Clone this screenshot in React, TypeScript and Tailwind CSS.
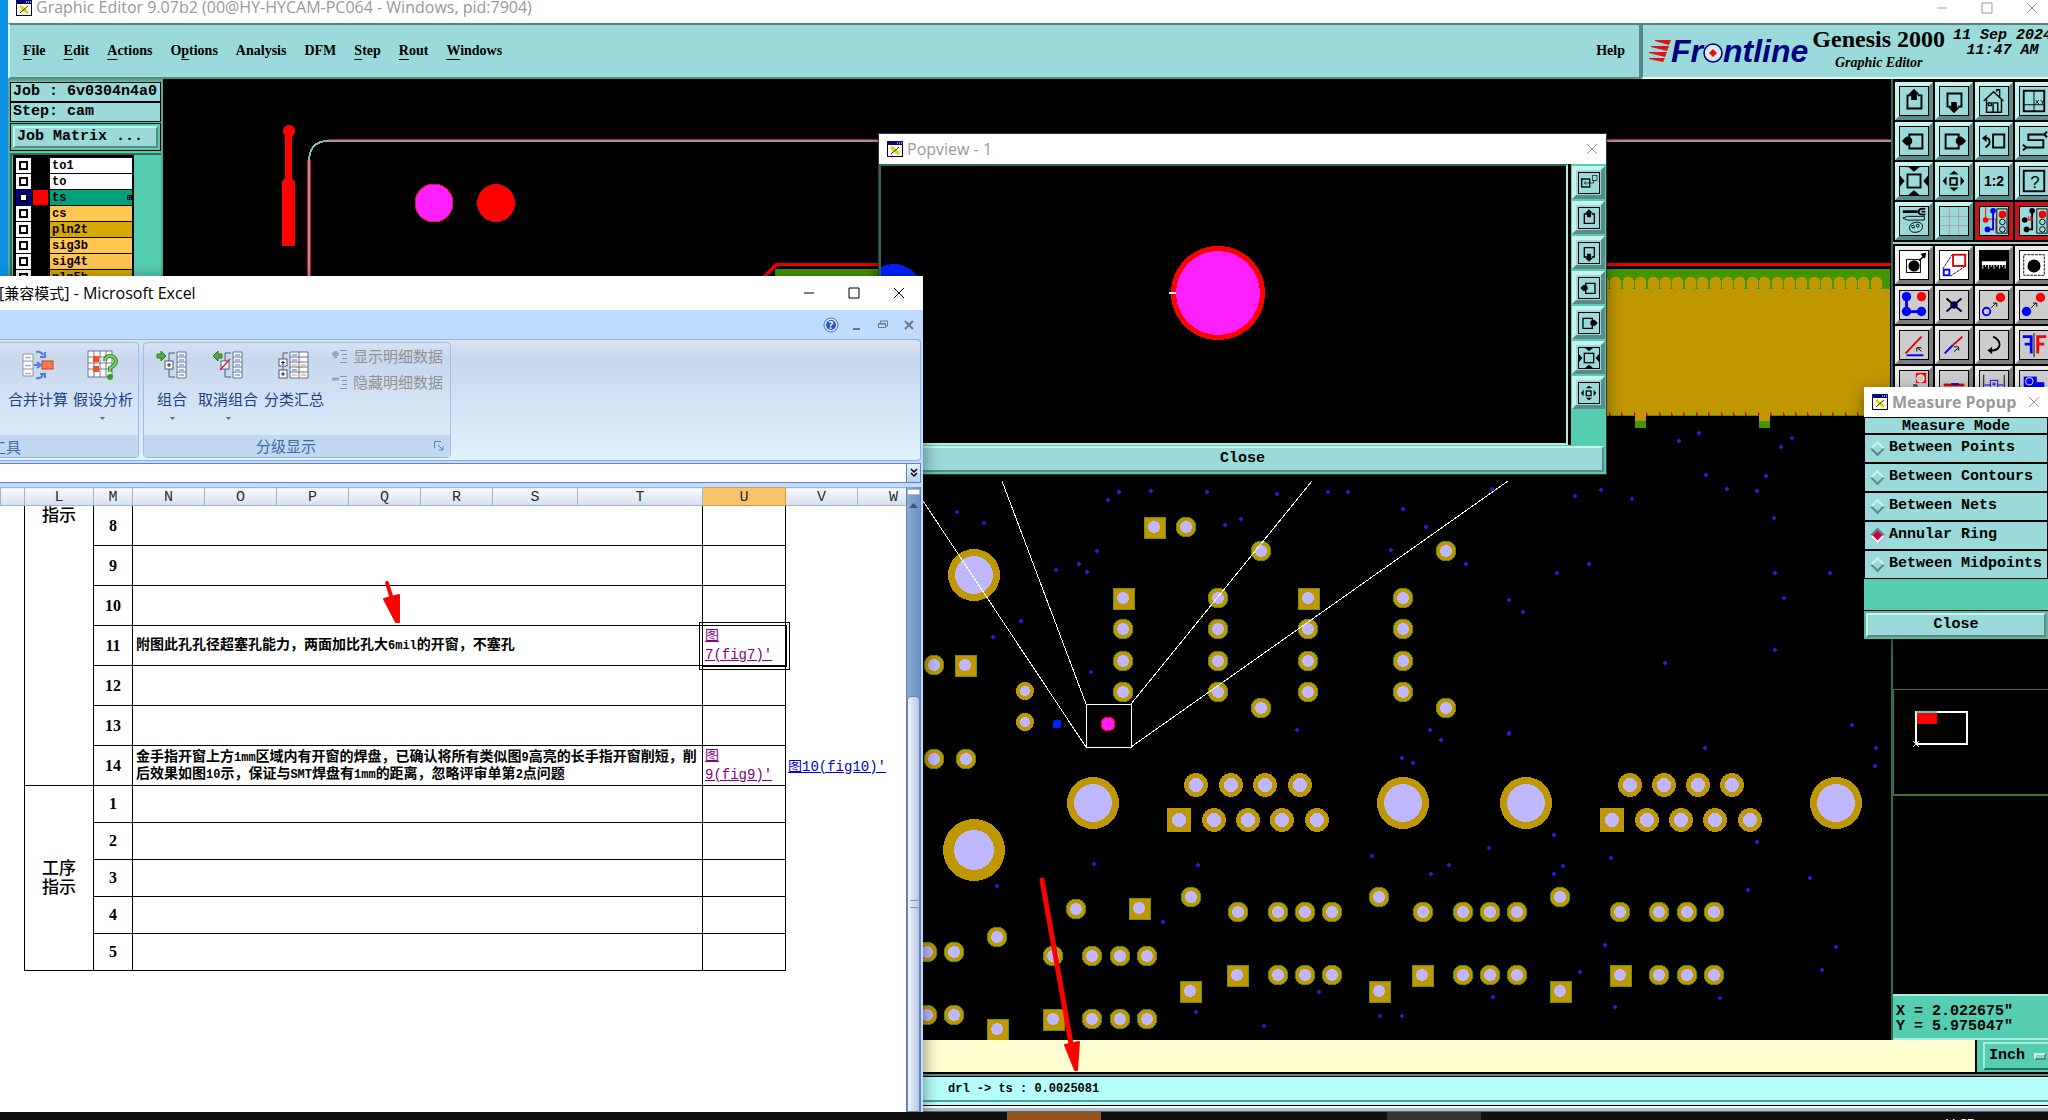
import type { ReactNode } from 'react';

const mono = "font-['Liberation_Mono',monospace] font-bold";
const serif = "font-['Liberation_Serif',serif]";
const ui = "font-['Open_Sans','Noto_Sans_CJK_SC',sans-serif]";
const raised = 'border-t-[#c8f4ee] border-l-[#c8f4ee] border-b-[#5c8a88] border-r-[#5c8a88]';

/* ---------- board drawing ---------- */

type Pad = [x: number, y: number];

const roundPads: Pad[] = [
  [1186, 527], [1261, 551], [1446, 551],
  [1123, 629], [1123, 661], [1123, 692],
  [1218, 598], [1218, 629], [1218, 661], [1218, 692],
  [1308, 629], [1308, 661], [1308, 692],
  [1403, 598], [1403, 629], [1403, 661], [1403, 692],
  [1261, 708], [1446, 708], [934, 665], [934, 759], [966, 759],
  [1076, 909], [997, 937], [927, 952], [954, 952],
  [1053, 956], [1092, 956], [1120, 956], [1147, 956],
  [927, 1015], [954, 1015], [1092, 1019], [1120, 1019], [1147, 1019],
  [1191, 897], [1238, 912], [1278, 912], [1305, 912], [1332, 912],
  [1278, 975], [1305, 975], [1332, 975],
  [1379, 897], [1423, 912], [1463, 912], [1490, 912], [1517, 912],
  [1463, 975], [1490, 975], [1517, 975],
  [1560, 897], [1620, 912], [1659, 912], [1687, 912], [1714, 912],
  [1659, 975], [1687, 975], [1714, 975],
];

const squarePads: Pad[] = [
  [1154, 527], [1123, 598], [1308, 598], [965, 665], [1139, 908], [997, 1029],
  [1053, 1019], [1190, 991], [1237, 975], [1379, 991], [1422, 975], [1560, 991], [1620, 975],
];

const connectorPads: Pad[] = [
  [1196, 785], [1231, 785], [1265, 785], [1300, 785],
  [1214, 820], [1248, 820], [1282, 820], [1317, 820],
  [1630, 785], [1664, 785], [1698, 785], [1732, 785],
  [1647, 820], [1681, 820], [1715, 820], [1750, 820],
];

const mountHoles: Pad[] = [[974, 575], [1093, 803], [1403, 803], [1526, 803], [1836, 803]];

const vias: Pad[] = [
  [1119, 492], [1151, 491], [1108, 500], [1207, 492], [1277, 494], [1328, 492], [1348, 492],
  [1492, 489], [1403, 509], [1426, 527], [1391, 550], [1466, 564], [957, 512], [984, 523],
  [1097, 551], [1056, 570], [1087, 572], [1079, 564], [1225, 525], [1241, 519], [1021, 621],
  [993, 637], [1091, 672], [1509, 600], [1297, 730], [1430, 730], [1441, 740], [1509, 734],
  [1402, 758], [1413, 763], [1094, 864], [997, 886], [1198, 865], [1163, 922], [1372, 856],
  [1449, 865], [1431, 874], [1489, 848], [1196, 1012], [1319, 992], [1264, 1026], [1380, 1016],
  [1402, 1016], [1493, 997], [1575, 496], [1601, 490], [1632, 499], [1727, 489], [1757, 491],
  [1774, 518], [1589, 564], [1557, 573], [1775, 573], [1830, 573], [1523, 612], [1784, 598],
  [1775, 650], [1665, 663], [1509, 733], [1705, 748], [1852, 725], [1876, 748], [1875, 766],
  [1554, 835], [1611, 858], [1757, 842], [1563, 866], [1554, 874], [1810, 878],
  [1748, 890], [1605, 945], [1836, 947], [1822, 970], [1580, 972], [1615, 1007],
  [1720, 998], [1679, 441], [1699, 433], [1781, 447], [1792, 438], [1706, 475], [1766, 476],
];

// 62px hold five fingers
const fingers = Array.from({ length: 23 }, (_, i) => 1597 + Math.round((i * 62) / 5));

function BoardCanvas() {
  return (
    <svg className="absolute inset-0 h-full w-full" shapeRendering="crispEdges" aria-label="Board view">
      <g transform="translate(-163 -79)">
        {/* tooling mark and board outline */}
        <circle cx="289" cy="131" r="6" fill="#f00" />
        <rect x="285" y="131" width="7" height="52" fill="#f00" />
        <path d="M282 246V182l3-4h7l3 4v64z" fill="#f00" />
        <path d="M309 290V160" fill="none" stroke="#e00010" strokeWidth="4" />
        <path d="M309 290V160Q310 141 328 141H1891" fill="none" stroke="#9c9c9c" strokeWidth="2" />
        <path d="M328 139.500H1891" fill="none" stroke="#c2131b" strokeWidth="1" />
        <path d="M309 160Q310 142 328 140" fill="none" stroke="#6fc7c7" strokeWidth="1" />
        <circle cx="434" cy="203" r="19" fill="#ff20ff" stroke="#e0103c" strokeWidth="1" />
        <circle cx="496" cy="203" r="19" fill="#f00" />

        {/* gold finger area */}
        <path d="M762 279L777 264H1891" fill="none" stroke="#f00000" strokeWidth="3" />
        <rect x="775" y="269" width="1115" height="147" fill="#439500" />
        <rect x="1600" y="289" width="290" height="126" fill="#bf9700" />
        {fingers.map((x) => (
          <g key={x}>
            <rect x={x + 1} y="277" width="11" height="14" rx="5" fill="#bf9700" />
            <path d={`M${x + 12} 412v3h1v-1`} stroke="#e00000" fill="none" />
          </g>
        ))}
        {[1635, 1759].map((x) => (
          <g key={x}>
            <rect x={x} y="415" width="11" height="6" fill="#bf9700" />
            <rect x={x} y="421" width="11" height="7" fill="#439500" />
          </g>
        ))}

        {vias.map(([x, y], i) => (
          <path key={i} d={`M${x - 2} ${y}h4M${x} ${y - 2}v4`} stroke="#1a22e0" strokeWidth="2" />
        ))}
        {roundPads.map(([x, y], i) => (
          <g key={i}>
            <circle cx={x} cy={y} r="10" fill="#bf9700" stroke="#4f8f00" strokeWidth="1" />
            <circle cx={x} cy={y} r="6" fill="#c0b8ff" />
          </g>
        ))}
        {squarePads.map(([x, y], i) => (
          <g key={i}>
            <rect x={x - 10} y={y - 10} width="21" height="21" fill="#bf9700" stroke="#6f9400" strokeWidth="1" />
            <circle cx={x} cy={y} r="6" fill="#c0b8ff" />
          </g>
        ))}
        {connectorPads.map(([x, y], i) => (
          <g key={i}>
            <circle cx={x} cy={y} r="12" fill="#bf9700" />
            <circle cx={x} cy={y} r="7" fill="#c0b8ff" />
          </g>
        ))}
        {[1179, 1612].map((x) => (
          <g key={x}>
            <rect x={x - 12} y="808" width="24" height="24" fill="#bf9700" />
            <circle cx={x} cy="820" r="7" fill="#c0b8ff" />
          </g>
        ))}
        {mountHoles.map(([x, y], i) => (
          <g key={i}>
            <circle cx={x} cy={y} r="26" fill="#bf9700" />
            <circle cx={x} cy={y} r="19" fill="#c0b8ff" />
          </g>
        ))}
        <circle cx="974" cy="850" r="31" fill="#bf9700" />
        <circle cx="974" cy="850" r="20" fill="#c0b8ff" />
        {[691, 722].map((y) => (
          <g key={y}>
            <circle cx="1025" cy={y} r="9" fill="#bf9700" />
            <circle cx="1025" cy={y} r="5" fill="#c0b8ff" />
          </g>
        ))}
        <rect x="1053" y="720" width="8" height="8" rx="2" fill="#0020ff" />

        {/* popview frame and its projection lines */}
        <path
          d="M923 501L1086 747M1002 481L1086 704M1312 481L1131 704M1508 481L1131 747"
          stroke="#fff"
          strokeWidth="1"
          fill="none"
        />
        <rect x="1086" y="704" width="45" height="43" fill="none" stroke="#fff" />
        <circle cx="1108" cy="724" r="7" fill="#ff20ff" stroke="#f00" />
      </g>
    </svg>
  );
}

/* ---------- toolbar icons, all on a 30x30 grid ---------- */

const upArrow = 'M15 2l6 6h-3v6h-6v-6h-3z';
const downArrow = 'M15 28l6-6h-3v-6h-6v6h-3z';

const icons: Record<string, ReactNode> = {
  panUp: (
    <>
      <path d="M12 9H8v14h15V9h-4" fill="none" stroke="#000" strokeWidth="2" />
      <path d={upArrow} />
    </>
  ),
  panDown: (
    <>
      <path d="M12 21H8V7h15v14h-4" fill="none" stroke="#000" strokeWidth="2" />
      <path d={downArrow} />
    </>
  ),
  panLeft: (
    <>
      <path d="M10 12V8h14v15H10v-4" fill="none" stroke="#000" strokeWidth="2" />
      <path d="M2 15l4-4h1v-1l4 1 2 2v4l-2 2-4 1v-1H6z" />
    </>
  ),
  panRight: (
    <>
      <path d="M20 12V8H6v15h14v-4" fill="none" stroke="#000" strokeWidth="2" />
      <path d="M28 15l-4-4h-1v-1l-4 1-2 2v4l2 2 4 1v-1h1z" />
    </>
  ),
  home: (
    <path
      d="M4 15L14.500 5L25 15M7 13v14h16V13M14 27V17h5v10M9 17h3v3H9zM18 5V3h3v8"
      fill="none"
      stroke="#000"
      strokeWidth="1.500"
    />
  ),
  xy: (
    <>
      <rect x="4" y="4" width="22" height="22" fill="none" stroke="#000" strokeWidth="2" />
      <path d="M15 4v22M4 19h22" stroke="#000" />
      <path d="M17 14l3 4M20 14l-3 4M22 14l2 2 2-2M24 16v2" stroke="#000" fill="none" />
    </>
  ),
  undo: (
    <>
      <rect x="14" y="8" width="12" height="14" fill="none" stroke="#000" strokeWidth="2" />
      <path d="M5 12h3q3 1 2 6l-4 4" fill="none" stroke="#000" strokeWidth="2" />
      <path d="M2 12l5-4v8z" />
    </>
  ),
  serpent: (
    <path
      d="M26 8H9v6h16v8H7M26 8l3-3M26 8l3 3M7 22l-4-3M7 22l-4 3"
      fill="none"
      stroke="#000"
      strokeWidth="2"
    />
  ),
  zoomIn: (
    <>
      <rect x="8" y="8" width="14" height="14" fill="none" stroke="#000" strokeWidth="2" />
      <path d="M9 0h12l-6 5zM9 30h12l-6-5zM0 9v12l5-6zM30 9v12l-5-6z" />
    </>
  ),
  zoomOut: (
    <>
      <rect x="11" y="12" width="7" height="7" fill="none" stroke="#000" strokeWidth="2" />
      <path d="M10 8h10l-5-4zM10 22h10l-5 4zM7 10v10l-4-5zM22 10v10l4-5z" />
    </>
  ),
  half: (
    <text x="15" y="20" textAnchor="middle" fontSize="15" className="font-['Liberation_Sans',sans-serif] font-bold">
      1:2
    </text>
  ),
  query: (
    <>
      <rect x="4" y="4" width="22" height="22" fill="none" stroke="#000" strokeWidth="2" />
      <text x="16" y="22" textAnchor="middle" fontSize="18" className="font-['Liberation_Sans',sans-serif]">
        ?
      </text>
    </>
  ),
  tools: (
    <g fill="none" stroke="#000">
      <path d="M3 5h16" strokeWidth="3" />
      <path d="M27 2q-7-1-7 3t7 3M23 5h4" strokeWidth="2" />
      <path d="M3 12l5-2h18v4H8z" />
      <path d="M12 18q8-4 12 1 1 7-6 8-7 1-8-4 0-2 2-5z" />
      <circle cx="14" cy="21" r="1.500" />
      <circle cx="19" cy="20" r="1.500" />
    </g>
  ),
  grid: <path d="M10 0v30M20 0v30M0 10h30M0 20h30" stroke="#b79a9a" />,
  netStop: (
    <>
      <path d="M6 0v13h11v15" stroke="#f00" fill="none" strokeWidth="1" />
      <path d="M14 4v20H8" stroke="#00f" fill="none" strokeWidth="2" />
      <circle cx="6" cy="14" r="3" fill="#f00" />
      <circle cx="14" cy="4" r="3" fill="#00f" />
      <circle cx="8" cy="24" r="3" fill="#00f" />
      <rect x="18" y="2" width="11" height="26" fill="#9adada" stroke="#000" />
      <circle cx="24" cy="8" r="4" fill="#f00" />
      <circle cx="24" cy="16" r="3" fill="none" stroke="#000" />
      <circle cx="24" cy="24" r="3" fill="none" stroke="#000" />
    </>
  ),
  netStop2: (
    <>
      <path d="M13 4v20H7" stroke="#000" fill="none" strokeWidth="2" />
      <path d="M6 14h8M9 10v4M11 10v4M13 10v4" stroke="#f00" />
      <circle cx="5" cy="14" r="3" />
      <circle cx="13" cy="4" r="3" />
      <circle cx="7" cy="24" r="3" />
      <rect x="18" y="2" width="11" height="26" fill="#9adada" stroke="#000" />
      <circle cx="24" cy="8" r="4" fill="#f00" />
      <circle cx="24" cy="16" r="3" fill="none" stroke="#000" />
      <circle cx="24" cy="24" r="3" fill="none" stroke="#000" />
    </>
  ),
  popOut: (
    <>
      <rect x="4" y="9" width="12" height="12" fill="none" stroke="#000" strokeWidth="2" />
      <rect x="20" y="4" width="7" height="7" fill="none" stroke="#000" />
      <path d="M8 15h14v-4M8 15l3-3M8 15l3 3" fill="none" stroke="#000" />
    </>
  ),
  select: (
    <>
      <rect x="7" y="9" width="15" height="14" fill="none" stroke="#000" strokeWidth="1" />
      <circle cx="15" cy="16" r="6" />
      <path d="M20 10l4-4-2-3 6-1-1 6-2-1-4 4z" />
    </>
  ),
  resize: (
    <>
      <rect x="14" y="4" width="13" height="12" fill="none" stroke="#e00000" strokeWidth="2" />
      <rect x="4" y="20" width="6" height="6" fill="none" stroke="#00f" strokeWidth="2" />
      <path d="M3 19L13 4M11 27l15-10" stroke="#000" strokeDasharray="3 1" />
    </>
  ),
  ruler: (
    <>
      <rect width="30" height="30" />
      <rect x="2" y="11" width="26" height="4" fill="#fff" />
      <path d="M3 15v4M6 15v2M9 15v4M12 15v2M15 15v4M18 15v2M21 15v4M24 15v2M27 15v4" stroke="#fff" />
    </>
  ),
  area: (
    <>
      <rect x="4" y="4" width="22" height="22" fill="none" stroke="#000" strokeDasharray="3 1" />
      <circle cx="15" cy="16" r="7" />
    </>
  ),
  net: (
    <>
      <path d="M7 6v16h15" fill="none" stroke="#00f" strokeWidth="3" />
      <circle cx="7" cy="6" r="5" fill="#00f" />
      <circle cx="7" cy="22" r="5" fill="#00f" />
      <circle cx="23" cy="22" r="5" fill="#00f" />
      <circle cx="23" cy="6" r="5" fill="#f00" />
    </>
  ),
  remove: (
    <>
      <circle cx="15" cy="15" r="4" fill="#0000c8" />
      <path d="M7 8l16 14M23 8L7 22" stroke="#000" strokeWidth="2" />
    </>
  ),
  moveTo: (
    <>
      <circle cx="7" cy="22" r="4" fill="none" stroke="#00f" strokeWidth="2" />
      <circle cx="22" cy="7" r="5" fill="#f00" />
      <path d="M12 18l5-5M14 13h4v4" fill="none" stroke="#000" />
    </>
  ),
  copyTo: (
    <>
      <circle cx="7" cy="22" r="5" fill="#00f" />
      <circle cx="22" cy="7" r="5" fill="#f00" />
      <path d="M12 18l5-5M14 13h4v4" fill="none" stroke="#000" />
    </>
  ),
  angle: (
    <>
      <path d="M6 24L23 6" stroke="#e00000" strokeWidth="2" />
      <path d="M7 26h18" stroke="#00f" strokeWidth="2" />
      <path d="M23 22l-4-4M18 22v-4h5" stroke="#000" fill="none" />
    </>
  ),
  extend: (
    <>
      <path d="M5 24l9-9" stroke="#00f" strokeWidth="2" />
      <path d="M14 15l10-9" stroke="#e00000" strokeWidth="2" />
      <path d="M15 22l5-4M15 17h5v4" stroke="#000" fill="none" />
    </>
  ),
  turn: (
    <>
      <path d="M14 6q7 3 7 9-1 6-9 6" fill="none" stroke="#000" strokeWidth="2" />
      <path d="M8 21l5-4v8z" />
    </>
  ),
  mirror: (
    <>
      <path d="M3 6h9v18M5 14h7" fill="none" stroke="#00f" strokeWidth="3" />
      <path d="M15 2v26" stroke="#000" />
      <path d="M28 6h-9v18M26 14h-7" fill="none" stroke="#f00" strokeWidth="3" />
    </>
  ),
  addPad: (
    <>
      <rect x="17" y="2" width="11" height="11" fill="#f00" />
      <circle cx="22" cy="8" r="4" fill="#ccc" stroke="#fff" />
      <path d="M12 19l5-4M14 15h4v4" stroke="#000" fill="none" />
    </>
  ),
  joint: (
    <>
      <path d="M4 15h22" stroke="#e00000" strokeWidth="3" />
      <path d="M12 14h8" stroke="#00c" strokeWidth="2" />
    </>
  ),
  width: (
    <g fill="none" stroke="#00f">
      <path d="M4 4v22M26 4v22" stroke="#000" />
      <rect x="11" y="10" width="8" height="8" />
      <path d="M5 15h6M19 15h6M13 14h4M15 12v4" />
    </g>
  ),
  shapes: (
    <>
      <rect x="4" y="6" width="14" height="12" fill="#00f" />
      <circle cx="10" cy="11" r="4" fill="#00f" stroke="#fff" />
      <rect x="14" y="12" width="12" height="12" fill="#00f" />
    </>
  ),
};

function ToolIcon({ name, className }: { name: string; className: string }) {
  return (
    <svg viewBox="0 0 30 30" className={`block border border-black ${className}`}>
      {icons[name]}
    </svg>
  );
}

const viewTools = [
  'panUp', 'panDown', 'home', 'xy',
  'panLeft', 'panRight', 'undo', 'serpent',
  'zoomIn', 'zoomOut', 'half', 'query',
  'tools', 'grid', 'netStop', 'netStop2',
];

const editTools = [
  'select', 'resize', 'ruler', 'area',
  'net', 'remove', 'moveTo', 'copyTo',
  'angle', 'extend', 'turn', 'mirror',
  'addPad', 'joint', 'width', 'shapes',
];

function AppIcon() {
  return (
    <svg viewBox="0 0 16 16" className="h-4 w-4 shrink-0">
      <rect x="0.500" y="0.500" width="15" height="15" fill="#fff" stroke="#000" />
      <rect x="0" y="0" width="16" height="4" fill="#0a0a6e" />
      <path d="M10 2h1M12 2h1M14 2h1" stroke="#fff" />
      <path d="M4 6l8 7" stroke="#e4d400" strokeWidth="3" />
      <path d="M12 6l-8 7" stroke="#222" strokeWidth="1" />
    </svg>
  );
}

function CaptionIcon({ kind }: { kind: 'min' | 'max' | 'close' }) {
  const d = { min: 'M1 6h10', max: 'M1 1h10v10H1z', close: 'M1 1l10 10M11 1L1 11' }[kind];
  return (
    <svg viewBox="0 0 12 12" className="h-3 w-3" fill="none" stroke="currentColor">
      <path d={d} />
    </svg>
  );
}

/* ---------- main window ---------- */

const menus = [
  ['', 'F', 'ile'],
  ['', 'E', 'dit'],
  ['', 'A', 'ctions'],
  ['O', 'p', 'tions'],
  ['Analysis', '', ''],
  ['DFM', '', ''],
  ['', 'S', 'tep'],
  ['', 'R', 'out'],
  ['', 'W', 'indows'],
];

function MenuBar() {
  return (
    <div className={`flex h-14 bg-[#9adada] text-black ${serif}`}>
      <nav className="flex flex-1 items-center gap-[18px] border-2 border-t-[#5c7f80] border-l-[#d8fbf8] border-b-[#5c8a88] border-r-[#5c8a88] pl-[13px] text-sm font-bold">
        {menus.map(([pre, key, post]) => (
          <button key={pre + key + post} type="button">
            {pre}
            <span className="underline underline-offset-4">{key}</span>
            {post}
          </button>
        ))}
        <button type="button" className="ml-auto pr-3.5">
          Help
        </button>
      </nav>
      <header className="flex w-[407px] overflow-hidden border-2 border-r-0 border-t-[#5c7f80] border-l-[#5c7f80] border-b-[#d8fbf8] pl-1.5">
        <div className="flex items-center text-[#00007f]">
          <svg viewBox="0 0 22 24" className="h-6 w-[22px]">
            <path d="M22 1H6v1l14 4zM20 7H2v1l16 4zM18 13H0v1l16 4zM16 19H0v1l14 3z" fill="#e81010" />
          </svg>
          <span className="flex items-center font-['Liberation_Sans',sans-serif] text-[32px] leading-8 font-bold italic">
            Fr
            <svg viewBox="0 0 20 20" className="mt-1 h-5 w-5">
              <circle cx="10" cy="10" r="9" fill="#d9ecec" stroke="#00007f" strokeWidth="1.500" />
              <path d="M10 6l4 4-4 4-4-4z" fill="#e81010" />
            </svg>
            ntline
          </span>
        </div>
        <div className="flex shrink-0 flex-col items-center pl-1 whitespace-nowrap">
          <span className="text-2xl leading-7 font-bold">Genesis 2000</span>
          <span className="text-sm leading-5 font-bold italic">Graphic Editor</span>
        </div>
        <p className={`shrink-0 pt-[3px] pl-2 text-center text-[15px] leading-[15px] whitespace-nowrap italic ${mono}`}>
          11 Sep 2024
          <br />
          11:47 AM
        </p>
      </header>
    </div>
  );
}

const layers = [
  { name: 'to1', bg: 'bg-white' },
  { name: 'to', bg: 'bg-white' },
  { name: 'ts', bg: 'bg-[#00a07c]', active: true },
  { name: 'cs', bg: 'bg-[#ffc750]' },
  { name: 'pln2t', bg: 'bg-[#d9a800]' },
  { name: 'sig3b', bg: 'bg-[#ffc750]' },
  { name: 'sig4t', bg: 'bg-[#ffc750]' },
  { name: 'pln5b', bg: 'bg-[#d9a800]' },
];

function LayerPanel() {
  return (
    <aside className={`w-[155px] shrink-0 border-2 border-[#5ba694] bg-[#55cdb0] text-[15px] text-black ${mono}`}>
      <div className="mt-px border border-black bg-[#9adada] pl-0.5 leading-[18px] whitespace-nowrap">Job : 6v0304n4a0</div>
      <div className="border border-black bg-[#9adada] pl-0.5 leading-[18px] whitespace-pre">Step: cam</div>
      <div className="mt-px border border-black p-0.5">
        <button type="button" className={`block w-full border-2 bg-[#9adada] pl-0.5 text-left leading-[18px] ${raised}`}>
          Job Matrix ...
        </button>
      </div>
      <div className="mt-0.5 h-full border-t-2 border-l-2 border-[#2f6b5c] pl-px">
        <ul className="w-[121px] border border-black bg-black p-px text-xs">
          {layers.map(({ name, bg, active }) => (
            <li key={name} className="mt-px flex h-[15px] items-center gap-0.5 pl-px">
              <input
                id={`layer-${name}`}
                type="checkbox"
                className={`h-[15px] w-[15px] appearance-none border-[3px] bg-white shadow-[inset_0_0_0_2px_black] ${
                  active ? 'border-[#00009c]' : 'border-white'
                }`}
              />
              <span className={`h-[15px] w-[15px] ${active ? 'bg-[#f00]' : ''}`} />
              <label htmlFor={`layer-${name}`} className={`flex h-[15px] flex-1 items-center justify-between pl-0.5 leading-3 ${bg}`}>
                {name}
                {active && (
                  <svg viewBox="0 0 5 5" className="h-[5px] w-[5px]" fill="none" stroke="#000">
                    <path d="M0.500 0.500h4v4h-4zM2.500 0v5M0 2.500h5" />
                  </svg>
                )}
              </label>
            </li>
          ))}
        </ul>
      </div>
    </aside>
  );
}

function ToolPanel() {
  return (
    <aside className="flex w-[157px] shrink-0 flex-col overflow-hidden border-l-2 border-[#2f6b5c] bg-black">
      <div className="grid w-[160px] grid-cols-[repeat(4,38px)] gap-0.5 border-b-2 border-[#9ccfc8] pt-[3px] pb-0.5 pl-0.5">
        {viewTools.map((name) => (
          <button
            key={name}
            type="button"
            aria-label={name}
            className={`h-[38px] border-4 bg-[#9adada] ${name.startsWith('netStop') ? 'border-[#c4161c]' : raised}`}
          >
            <ToolIcon name={name} className="h-[30px] w-[30px]" />
          </button>
        ))}
      </div>
      <div className="grid w-[160px] grid-cols-[repeat(4,38px)] gap-0.5 pt-0.5 pl-0.5">
        {editTools.map((name, i) => (
          <button
            key={name}
            type="button"
            aria-label={name}
            className={`h-[38px] border-4 border-t-[#ececec] border-l-[#ececec] border-b-[#7d7d7d] border-r-[#7d7d7d] ${
              i < 4 ? 'bg-white' : 'bg-[#cccccc]'
            }`}
          >
            <ToolIcon name={name} className="h-[30px] w-[30px]" />
          </button>
        ))}
      </div>
      <div className="flex-1" />
      {/* panel overview map */}
      <svg className="h-[305px] w-full shrink-0" shapeRendering="crispEdges" aria-label="Overview map">
        <rect x="0" y="0" width="200" height="106" fill="none" stroke="#3f7a22" strokeWidth="2" />
        <rect x="23" y="23" width="51" height="32" fill="none" stroke="#fff" strokeWidth="2" />
        <rect x="24" y="24" width="20" height="11" fill="#f00" />
        <path d="M23 23h21" stroke="#40d8e0" strokeWidth="2" />
        <path d="M20 52l6 6M26 52l-6 6" stroke="#fff" />
      </svg>
      <div className={`h-[46px] border-y-2 border-t-[#a8ecdc] border-b-[#a8ecdc] bg-[#55cdb0] pt-2 pl-[3px] text-[15px] leading-[15px] whitespace-nowrap ${mono}`}>
        X = 2.022675"
        <br />Y = 5.975047"
      </div>
    </aside>
  );
}

function StatusArea() {
  return (
    <footer className={`text-black ${mono}`}>
      <div className="flex h-8 bg-[#ffffcf]">
        <div className="flex-1" />
        <div className="w-[73px] overflow-hidden border-l-2 border-black bg-[#55cdb0] pt-0.5 pl-1.5">
          <label className="flex h-7 w-20 items-center gap-2 border-2 border-t-[#a8ecdc] border-l-[#a8ecdc] border-b-[#2f6b5c] border-r-[#2f6b5c] pl-1 text-[15px]">
            <select aria-label="Units" className="appearance-none bg-transparent">
              <option>Inch</option>
            </select>
            <span className={`h-[7px] w-3 border-2 bg-[#7fd8cc] ${raised}`} />
          </label>
        </div>
      </div>
      <div className="h-10 border-t-2 border-black">
        <div className="h-0.5 bg-[#5c8a88]" />
        <div className="flex h-[26px] items-center border-t border-b-2 border-t-black border-b-[#5c9a96] bg-[#b4fffe] pl-[940px] text-xs">
          drl -&gt; ts : 0.0025081
        </div>
        <div className="h-1 border-b border-black bg-[#b4fffe]" />
        <div className="h-1.5 border-t-2 border-b border-t-white border-b-[#52697c] bg-[#b3bfca]" />
      </div>
    </footer>
  );
}

function GraphicEditor() {
  return (
    <main className="ml-2 flex min-h-0 flex-1 flex-col overflow-hidden bg-white">
      <div className={`flex h-[23px] items-start pl-2 text-base text-[#999999] ${ui}`}>
        <AppIcon />
        <h1 className="pl-1 leading-[15px]">Graphic Editor 9.07b2 (00@HY-HYCAM-PC064 - Windows, pid:7904)</h1>
        <div className="-mr-1.5 ml-auto flex">
          {(['min', 'max', 'close'] as const).map((kind) => (
            <button key={kind} type="button" aria-label={kind} className="flex h-[15px] w-[45px] items-center justify-center">
              <CaptionIcon kind={kind} />
            </button>
          ))}
        </div>
      </div>
      <MenuBar />
      <div className="flex min-h-0 flex-1">
        <LayerPanel />
        <div className="relative flex-1 overflow-hidden bg-black">
          <BoardCanvas />
        </div>
        <ToolPanel />
      </div>
      <StatusArea />
    </main>
  );
}

/* ---------- popups ---------- */

function PopupTitle({ title }: { title: string }) {
  return (
    <div className={`flex h-[30px] items-center bg-white pr-2 pl-2 text-base text-[#999999] ${ui}`}>
      <AppIcon />
      <h2 className="pl-1">{title}</h2>
      <button type="button" aria-label="Close window" className="ml-auto">
        <CaptionIcon kind="close" />
      </button>
    </div>
  );
}

function Popview() {
  return (
    <section className="absolute top-[133px] left-[878px] w-[729px] border border-[#333] bg-black text-black shadow-[0_4px_14px_rgba(0,0,0,0.4)]">
      <PopupTitle title="Popview - 1" />
      <div className="flex h-[281px]">
        <div className="flex-1 border-2 border-t-[#2f6b5c] border-l-[#2f6b5c] border-b-[#b4ecdf] border-r-[#b4ecdf]">
          <svg className="h-full w-full" shapeRendering="crispEdges" aria-label="Magnified pad">
            <circle cx="13" cy="126" r="28" fill="#0020ff" />
            <circle cx="337" cy="127" r="47" fill="#f00" />
            <circle cx="337" cy="127" r="42" fill="#ff20ff" />
            <path d="M288 127h7" stroke="#fff" strokeWidth="2" />
          </svg>
        </div>
        <div className="ml-0.5 flex w-9 flex-col gap-0.5 border-l border-black bg-[#55cdb0] px-px pt-0.5">
          {['popOut', 'panUp', 'panDown', 'panLeft', 'panRight', 'zoomIn', 'zoomOut'].map((name) => (
            <button
              key={name}
              type="button"
              aria-label={name}
              className={`flex h-[33px] items-center justify-center border-4 bg-[#9adada] ${raised}`}
            >
              <ToolIcon name={name} className="h-[22px] w-[22px]" />
            </button>
          ))}
        </div>
      </div>
      <div className="border-2 border-t border-[#55cdb0]">
        <button type="button" className={`block w-full border-2 bg-[#9adada] text-[15px] leading-[22px] ${raised} ${mono}`}>
          Close
        </button>
      </div>
    </section>
  );
}

const measureModes = ['Between Points', 'Between Contours', 'Between Nets', 'Annular Ring', 'Between Midpoints'];

function MeasurePopup() {
  return (
    <section className={`absolute top-[387px] right-0 w-[184px] bg-[#55cdb0] text-[15px] text-black shadow-[0_4px_14px_rgba(0,0,0,0.4)] ${mono}`}>
      <PopupTitle title="Measure Popup" />
      <fieldset>
        <legend className="h-[17px] w-full border border-black bg-[#9adada] text-center leading-[17px]">Measure Mode</legend>
        {measureModes.map((mode) => (
          <label key={mode} className="flex h-[29px] items-center border border-black bg-[#9adada] pl-[7px] whitespace-nowrap">
            <input
              type="radio"
              name="measure"
              defaultChecked={mode === 'Annular Ring'}
              className="mr-1.5 h-[11px] w-[11px] shrink-0 rotate-45 appearance-none border-2 border-t-[#c8f4ee] border-l-[#c8f4ee] border-b-[#5c8a88] border-r-[#5c8a88] checked:border-t-[#5c8a88] checked:border-l-[#5c8a88] checked:border-b-white checked:border-r-white checked:bg-[#c80050]"
            />
            {mode}
          </label>
        ))}
      </fieldset>
      <div className="h-8 border-b border-black" />
      <div className="border-2 border-[#55b89f]">
        <button type="button" className={`block w-full border-2 bg-[#9adada] leading-[20px] ${raised}`}>
          Close
        </button>
      </div>
    </section>
  );
}

/* ---------- spreadsheet window ---------- */

const sheetIcons: Record<string, ReactNode> = {
  merge: (
    <>
      <path d="M1 5h10v22H1z" fill="#fff" stroke="#8a93a8" />
      <path d="M1 12h10M1 20h10M3 8l2 1 2-1 2 1M3 16l2 1 2-1 2 1M3 24l2 1 2-1 2 1" stroke="#8a93a8" fill="none" />
      <rect x="20" y="12" width="11" height="8" fill="#ff7448" stroke="#c0401c" />
      <path d="M12 16h5M15 13l4 3-4 3M14 3q5-1 7 3M23 3v5h-5M14 29q5 1 7-3M23 29v-4h-5" stroke="#4f7ede" strokeWidth="2" fill="none" />
    </>
  ),
  whatIf: (
    <>
      <path d="M1 2h24v26H1z" fill="#fff" stroke="#6b7894" />
      <path d="M1 8h24M1 14h24M1 20h24M7 2v26M13 2v26M19 2v26" stroke="#6b7894" />
      <rect x="6" y="7" width="6" height="6" fill="#ff4a1c" />
      <rect x="6" y="17" width="6" height="6" fill="#ff4a1c" />
      <path d="M18 12q0-5 5-5t6 5q0 4-6 7v4" stroke="#3c9a2c" strokeWidth="4" fill="none" />
      <path d="M18 12q0-5 5-5t6 5q0 4-6 7v4" stroke="#8fd870" strokeWidth="1.500" fill="none" />
      <circle cx="23" cy="28" r="3" fill="#3c9a2c" />
    </>
  ),
  group: (
    <>
      <path d="M21 3h9v26h-9z" fill="#fff" stroke="#62718f" />
      <path d="M21 8h9M21 13h9M21 18h9M21 23h9" stroke="#62718f" />
      <path d="M23 6h5M23 11h5M23 16h5M23 21h5M23 26h5" stroke="#3c6fe0" />
      <path d="M19 4h-6v8M13 20v8h6" stroke="#4d5b78" fill="none" />
      <rect x="9" y="12" width="8" height="8" fill="#fff" stroke="#4d5b78" />
      <path d="M11 16h4M13 14v4" stroke="#223" />
      <path d="M1 5h4V2l5 5-5 5V9H1z" fill="#4fae3a" stroke="#2c7a1c" />
    </>
  ),
  ungroup: (
    <>
      <path d="M21 3h9v26h-9z" fill="#fff" stroke="#62718f" />
      <path d="M21 8h9M21 13h9M21 18h9M21 23h9" stroke="#62718f" />
      <path d="M23 6h5M23 11h5M23 16h5M23 21h5M23 26h5" stroke="#3c6fe0" />
      <path d="M19 4h-6v8M13 20v8h6" stroke="#4d5b78" fill="none" />
      <rect x="9" y="12" width="8" height="8" fill="#fff" stroke="#4d5b78" />
      <path d="M8 21l10-11" stroke="#e02020" strokeWidth="1.500" />
      <path d="M10 5H6V2L1 7l5 5V9h4z" fill="#4fae3a" stroke="#2c7a1c" />
    </>
  ),
  subtotal: (
    <>
      <path d="M12 3h18v26H12z" fill="#fff" stroke="#62718f" />
      <path d="M12 8h18M12 13h18M12 18h18M12 23h18M21 3v26" stroke="#62718f" />
      <path d="M14 6h5M14 11h5M14 21h5" stroke="#3c6fe0" />
      <path d="M14 16h5M23 16h5M14 26h5M23 26h5" stroke="#f09020" />
      <path d="M10 4H5v6M5 17v4" stroke="#4d5b78" fill="none" />
      <rect x="1" y="10" width="8" height="7" fill="#fff" stroke="#4d5b78" />
      <rect x="1" y="21" width="8" height="8" fill="#fff" stroke="#4d5b78" />
      <path d="M3 13.500h4M5 12v4M3 25h4M5 23v4" stroke="#223" />
    </>
  ),
};

function RibbonButton({ icon, label, arrow }: { icon: string; label: string; arrow?: boolean }) {
  return (
    <button type="button" className="flex flex-col items-center text-[15px] leading-5 text-[#1e3f8c]">
      <svg viewBox="0 0 32 32" className="h-8 w-8">
        {sheetIcons[icon]}
      </svg>
      <span className="mt-2 whitespace-nowrap">{label}</span>
      {arrow && (
        <svg viewBox="0 0 5 3" className="mt-2 h-[3px] w-[5px]" fill="#5a6f96">
          <path d="M0 0h5L2.500 3z" />
        </svg>
      )}
    </button>
  );
}

function DetailButton({ label, sign }: { label: string; sign: string }) {
  return (
    <button type="button" disabled className="flex items-center gap-1.5 text-[15px] leading-[26px] text-[#8f9399]">
      <svg viewBox="0 0 15 15" className="h-[15px] w-[15px]" fill="none" stroke="#8494b4">
        <path d="M8 1.500h7M10 5.500h5M10 9.500h5M8 13.500h7" />
        <path d={sign} stroke="#9aa4b8" strokeWidth="3" />
      </svg>
      <span className="whitespace-nowrap">{label}</span>
    </button>
  );
}

function Ribbon() {
  return (
    <div className="mr-0.5 flex h-[122px] shrink-0 gap-1 rounded-r border border-l-0 border-[#8db2e3] bg-linear-to-b from-[#dae5f1] from-0% via-[#c7d8ed] via-15% to-[#e0f2fd] pt-0.5 pb-0.5">
      <div className="flex w-[139px] shrink-0 flex-col justify-between overflow-hidden rounded-r border border-l-0 border-[#9fbfe2]">
        <div className="flex items-start justify-end gap-[5px] pt-1.5 pr-[5px]">
          <RibbonButton icon="merge" label="合并计算" />
          <RibbonButton icon="whatIf" label="假设分析" arrow />
        </div>
        <div className="h-[22px] bg-[#c1d8f0]">
          <span className="-ml-[9px] text-[15px] leading-[22px] text-[#3e6aaa]">工具</span>
        </div>
      </div>
      <div className="flex w-[308px] shrink-0 flex-col justify-between rounded border border-[#9fbfe2]">
        <div className="flex items-start gap-1.5 pt-1.5 pl-3">
          <RibbonButton icon="group" label="组合" arrow />
          <div className="pl-1">
            <RibbonButton icon="ungroup" label="取消组合" arrow />
          </div>
          <RibbonButton icon="subtotal" label="分类汇总" />
          <div className="-mt-1.5 pl-0.5">
            <DetailButton label="显示明细数据" sign="M0 5h7M3.500 2v7" />
            <DetailButton label="隐藏明细数据" sign="M0 4h7" />
          </div>
        </div>
        <div className="flex h-[22px] items-center bg-[#c1d8f0] px-1.5 text-[15px] leading-[22px] text-[#3e6aaa]">
          <span className="flex-1 pr-5 text-center">分级显示</span>
          <svg viewBox="0 0 10 10" className="-ml-2 h-2.5 w-2.5" fill="none" stroke="#5a7fb4">
            <path d="M0.500 7V0.500H7M4 4l5 5M9 5v4H5" />
          </svg>
        </div>
      </div>
    </div>
  );
}

const columns = [
  { id: '', w: 'w-[24px]' },
  { id: 'L', w: 'w-[69px]' },
  { id: 'M', w: 'w-[39px]' },
  { id: 'N', w: 'w-[72px]' },
  { id: 'O', w: 'w-[72px]' },
  { id: 'P', w: 'w-[72px]' },
  { id: 'Q', w: 'w-[72px]' },
  { id: 'R', w: 'w-[72px]' },
  { id: 'S', w: 'w-[85px]' },
  { id: 'T', w: 'w-[125px]' },
  { id: 'U', w: 'w-[83px]' },
  { id: 'V', w: 'w-[72px]' },
  { id: 'W', w: 'w-[72px]' },
];

const rows: { no: number; group?: string[]; span?: number; lines?: string[]; fig?: string[]; extra?: string }[] = [
  { no: 8, group: ['指示'], span: 7 },
  { no: 9 },
  { no: 10 },
  { no: 11, lines: ['附图此孔孔径超塞孔能力，两面加比孔大6mil的开窗，不塞孔'], fig: ['图', "7(fig7)'"] },
  { no: 12 },
  { no: 13 },
  {
    no: 14,
    lines: [
      '金手指开窗上方1mm区域内有开窗的焊盘，已确认将所有类似图9高亮的长手指开窗削短，削',
      '后效果如图10示，保证与SMT焊盘有1mm的距离，忽略评审单第2点问题',
    ],
    fig: ['图', "9(fig9)'"],
    extra: "图10(fig10)'",
  },
  { no: 1, group: ['工序', '指示'], span: 5 },
  { no: 2 },
  { no: 3 },
  { no: 4 },
  { no: 5 },
];

// latin runs are set smaller so that they take half the width of a CJK glyph
function MixedText({ text }: { text: string }) {
  return (
    <span className="block text-sm leading-4 font-bold whitespace-nowrap">
      {text.split(/([0-9A-Za-z]+)/).map((part, i) =>
        i % 2 ? (
          <span key={i} className="font-['Liberation_Mono',monospace] text-xs">
            {part}
          </span>
        ) : (
          part
        ),
      )}
    </span>
  );
}

function Sheet() {
  return (
    <table className="w-[929px] table-fixed border-collapse text-black">
      <thead>
        <tr className="h-[18px]">
          {columns.map(({ id, w }) => (
            <th
              key={id}
              scope="col"
              className={`border-x border-y p-0 pt-0.5 font-['Liberation_Mono',monospace] text-[15px] leading-[15px] font-normal text-[#22313f] ${w} ${
                id === 'U' ? 'border-[#e8983c] bg-[#f8c46c]' : 'border-[#9eb6ce] bg-linear-to-b from-[#f8fafc] to-[#d6dfec]'
              }`}
            >
              {id}
            </th>
          ))}
        </tr>
      </thead>
      <tbody className="font-['Liberation_Serif','Noto_Sans_CJK_SC',serif]">
        {rows.map(({ no, group, span, lines, fig, extra }, i) => (
          <tr key={i} className={i < 7 ? 'h-10' : 'h-[37px]'}>
            <td className="p-0" />
            {group && (
              <td
                rowSpan={span}
                className={`border border-black p-0 text-center text-[17px] leading-[19px] font-medium ${i === 0 ? 'align-top' : ''}`}
              >
                {group.map((g) => (
                  <span key={g} className="block">
                    {g}
                  </span>
                ))}
              </td>
            )}
            <td className="border border-black p-0 text-center text-base leading-5 font-bold">{no}</td>
            <td colSpan={7} className="border border-black p-0 pl-[3px]">
              {lines?.map((line) => <MixedText key={line} text={line} />)}
            </td>
            <td className={`border border-black p-0 pl-0.5 ${no === 11 ? 'outline-4 outline-double outline-black' : ''}`}>
              {fig && (
                <a href="#fig" className="block font-['Liberation_Mono','Noto_Sans_CJK_SC',monospace] text-sm leading-[19px] text-[#800080] underline">
                  {fig[0]}
                  <br />
                  {fig[1]}
                </a>
              )}
            </td>
            <td colSpan={2} className="p-0 pl-0.5">
              {extra && (
                <a href="#fig10" className="font-['Liberation_Mono','Noto_Sans_CJK_SC',monospace] text-sm leading-[19px] text-[#0000d0] underline">
                  {extra}
                </a>
              )}
            </td>
          </tr>
        ))}
      </tbody>
    </table>
  );
}

function ExcelWindow() {
  return (
    <section className={`absolute top-[276px] bottom-2 left-0 flex w-[923px] flex-col bg-[#bfdbff] shadow-[0_4px_16px_rgba(0,0,0,0.5)] ${ui}`}>
      <div className="flex h-[34px] shrink-0 items-center bg-white text-black">
        <h2 className="-ml-px text-base whitespace-nowrap">
          <span>[</span>
          <span className="text-[15px]">兼容模式</span>
          <span>] - Microsoft Excel</span>
        </h2>
        <div className="ml-auto flex pr-0.5">
          {(['min', 'max', 'close'] as const).map((kind) => (
            <button key={kind} type="button" aria-label={kind} className="flex h-[30px] w-[45px] items-center justify-center">
              <CaptionIcon kind={kind} />
            </button>
          ))}
        </div>
      </div>
      <div className="flex h-[29px] shrink-0 items-center justify-end gap-2.5 pr-1.5 text-[#6b7686]">
        <button type="button" aria-label="Help">
          <svg viewBox="0 0 16 16" className="h-4 w-4">
            <circle cx="8" cy="8" r="7" fill="#dce9ff" stroke="#3f6fd0" />
            <circle cx="8" cy="8" r="5" fill="#2456cc" />
            <text x="8" y="12" textAnchor="middle" fontSize="10" fill="#fff" className="font-bold">
              ?
            </text>
          </svg>
        </button>
        <button type="button" aria-label="Minimize workbook">
          <svg viewBox="0 0 10 10" className="h-2.5 w-4" stroke="currentColor" strokeWidth="2">
            <path d="M1 9h7" />
          </svg>
        </button>
        <button type="button" aria-label="Restore workbook">
          <svg viewBox="0 0 10 10" className="h-2.5 w-4" fill="none" stroke="currentColor">
            <path d="M2.500 3V1h7v5H8M0.500 3.500h7v4h-7zM0 4h8" />
          </svg>
        </button>
        <button type="button" aria-label="Close workbook">
          <svg viewBox="0 0 10 10" className="h-2.5 w-4" stroke="currentColor" strokeWidth="2">
            <path d="M1 1l8 8M9 1L1 9" />
          </svg>
        </button>
      </div>
      <Ribbon />
      <div className="mt-0.5 mr-0.5 flex h-5 shrink-0 border-y border-[#5f86b8] bg-white">
        <input aria-label="Formula bar" className="min-w-0 flex-1 outline-none" />
        <button type="button" aria-label="Expand formula bar" className="flex w-[15px] items-center justify-center border-x border-[#5f86b8] bg-linear-to-b from-[#e8f1fc] to-[#b9d1f0] text-black">
          <svg viewBox="0 0 8 10" className="h-2.5 w-2" fill="none" stroke="currentColor" strokeWidth="1.500">
            <path d="M1 1l3 3 3-3M1 5l3 3 3-3" />
          </svg>
        </button>
      </div>
      <div className="mt-1 mr-0.5 flex min-h-0 flex-1 bg-white">
        <div className="min-w-0 flex-1 overflow-hidden">
          <Sheet />
        </div>
        <div className="flex w-[15px] shrink-0 flex-col border-x border-[#5f86b8] bg-linear-to-r from-[#8aa9d4] to-[#6f90c0]">
          <div className="mt-0.5 h-1.5 border border-[#9eb6ce] bg-white" />
          <svg viewBox="0 0 9 6" className="mx-auto mt-2 h-1.5 w-[9px]" fill="#3c5680">
            <path d="M0 5l4.500-5L9 5z" />
          </svg>
          <div className="mt-[187px] flex flex-1 flex-col items-center justify-center rounded-t border border-[#6b86ae] bg-linear-to-r from-[#f2f5fa] to-[#b3c6e0]">
            <span className="h-2 w-2 border-y border-[#7b93b8]" />
          </div>
        </div>
      </div>
    </section>
  );
}

function Annotations() {
  return (
    <svg className="pointer-events-none absolute inset-0 h-full w-full" fill="#f00" stroke="#f00" strokeLinecap="round" strokeLinejoin="round">
      <path d="M387 583l5 16" strokeWidth="4" />
      <path d="M384 599l15-4v27l-3 0z" strokeWidth="2" />
      <path d="M1042 880l29 164" strokeWidth="5" />
      <path d="M1065 1045l14-3-2 28-2 0z" strokeWidth="2" />
    </svg>
  );
}

export default function App() {
  return (
    <div className="relative flex h-screen w-full flex-col overflow-hidden bg-[#0c93e4]">
      <GraphicEditor />
      <Popview />
      <ExcelWindow />
      <MeasurePopup />
      <Annotations />
      <div className="relative flex h-2 shrink-0 bg-[#101010] pl-[1007px]">
        <span className="w-[94px] bg-[#99531c]" />
        <span className="ml-[286px] w-[94px] bg-[#333333]" />
        <time className={`ml-auto h-2 overflow-hidden pt-1 pr-[74px] text-xs leading-4 text-white ${ui}`}>11:57</time>
      </div>
    </div>
  );
}
